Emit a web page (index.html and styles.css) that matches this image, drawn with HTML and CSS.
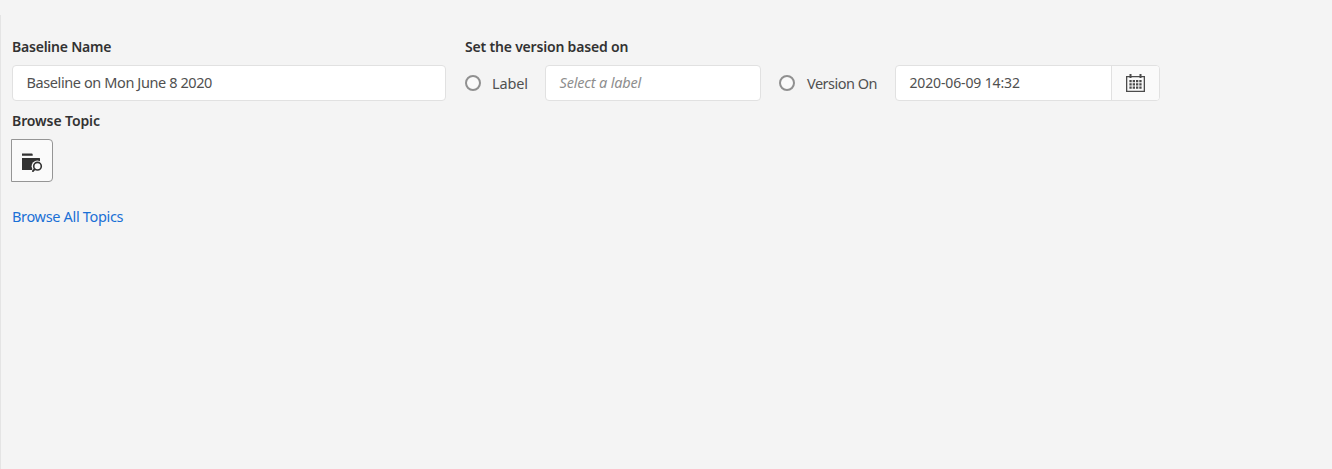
FILE: index.html
```html
<!DOCTYPE html>
<html lang="en">
<head>
<meta charset="utf-8">
<title>Baseline</title>
<link rel="stylesheet" href="styles.css">
</head>
<body>
<main class="panel">
  <div class="top">
    <section class="name-group">
      <label class="heading" for="name"><span class="h-name">Baseline Name</span></label>
      <div class="field name-field" id="name"><span class="t-name">Baseline on Mon June 8 2020</span></div>
    </section>
    <section class="version-group">
      <div class="heading"><span class="h-version">Set the version based on</span></div>
      <div class="options">
        <span class="radio"></span>
        <span class="option-text label-text">Label</span>
        <div class="field label-field"><span class="t-select">Select a label</span></div>
        <span class="radio"></span>
        <span class="option-text version-text">Version On</span>
        <div class="field date-field">
          <span class="t-date">2020-06-09 14:32</span>
          <button class="calendar" aria-label="Choose date">
            <svg width="19" height="20" viewBox="0 0 19 20">
              <path fill="none" stroke="#4b4b4b" stroke-width="1.300" d="M.65 3.650h17.700v14.700H.65z"/>
              <path fill="#4b4b4b" d="M3.500 1h2v4h-2zM13.500 1h2v4h-2z"/>
              <path fill="none" stroke="#4b4b4b" stroke-width="2.300" stroke-dasharray="2.300 1" d="M3.400 8.200h12.200M3.400 11.400h12.200M3.400 14.600h12.200"/>
            </svg>
          </button>
        </div>
      </div>
    </section>
  </div>
  <div class="heading topic-heading"><span class="h-topic">Browse Topic</span></div>
  <button class="browse" aria-label="Browse topic">
    <svg width="22" height="22" viewBox="0 0 22 22">
      <path fill="#323232" d="M1 2.600h9.700a1 1 0 0 1 1 1v1.200H1zM1 7h17.500a.5.5 0 0 1 .5.500V19H1z"/>
      <circle cx="16.300" cy="15.200" r="5.700" fill="#fafafa"/>
      <path d="M10 21l2-4 4 3v2z" fill="#fafafa"/>
      <circle cx="16.500" cy="15.200" r="3.800" fill="#fafafa" stroke="#323232" stroke-width="1.600"/>
      <path d="M13.700 18.100l-1.800 2" stroke="#323232" stroke-width="1.900" stroke-linecap="round"/>
    </svg>
  </button>
  <a class="all" href="#"><span class="t-all">Browse All Topics</span></a>
</main>
</body>
</html>
```
FILE: styles.css
```css
* { box-sizing: border-box; }
body {
  margin: 0;
  padding-top: 15px;
  height: 469px;
  overflow: hidden;
  background: #f4f4f4;
  color: #505050;
  font-family: "Noto Sans", "Open Sans", sans-serif;
  font-size: 14.5px;
  line-height: 20px;
  white-space: nowrap;
}
.panel {
  height: 454px;
  padding: 22px 0 0 11px;
  border-left: 1px solid #e4e4e4;
}
.top { display: flex; gap: 19px; }
.name-group { width: 434px; }
.heading {
  display: block;
  height: 20px;
  color: #323232;
  font-weight: 600;
  font-size: 14px;
}
.field {
  display: flex;
  align-items: center;
  height: 36px;
  padding: 0 0 2px 13.5px;
  background: #fff;
  border: 1px solid #e1e1e1;
  border-radius: 4px;
}
.name-field { margin-top: 8px; }
.options { display: flex; align-items: center; margin-top: 8px; }
.radio {
  width: 16px;
  height: 16px;
  border: 2px solid #909090;
  border-radius: 50%;
  background: #fafafa;
}
.option-text { padding-left: 11px; }
.label-text { width: 64px; letter-spacing: -.15px; }
.version-text { width: 100px; padding-left: 12px; letter-spacing: -.5px; }
.label-field { width: 216px; margin-right: 18px; }
.date-field { width: 265px; padding-bottom: 0; }
.t-name { letter-spacing: -.4px; }
.t-select { font-style: italic; color: #8e8e8e; letter-spacing: -.17px; }
.t-date { font-size: 14px; letter-spacing: -.14px; }
.calendar {
  display: flex;
  align-items: center;
  justify-content: center;
  width: 48px;
  height: 34px;
  margin-left: auto;
  padding: 0;
  background: #fafafa;
  border: 0;
  border-left: 1px solid #e1e1e1;
  border-radius: 0 3px 3px 0;
}
.topic-heading { margin-top: 10px; }
.browse {
  display: flex;
  align-items: center;
  justify-content: center;
  width: 42px;
  height: 43px;
  margin: 8px 0 0 -1px;
  padding: 3px 0 0;
  background: #fafafa;
  border: 1px solid #959595;
  border-radius: 0 4px 4px 0;
}
.all {
  display: block;
  margin-top: 24px;
  color: #1a70d6;
  text-decoration: none;
}
.h-name { letter-spacing: -.22px; }
.h-version { letter-spacing: -.19px; }
.h-topic { letter-spacing: -.1px; }
.t-all { letter-spacing: -.33px; }
```
